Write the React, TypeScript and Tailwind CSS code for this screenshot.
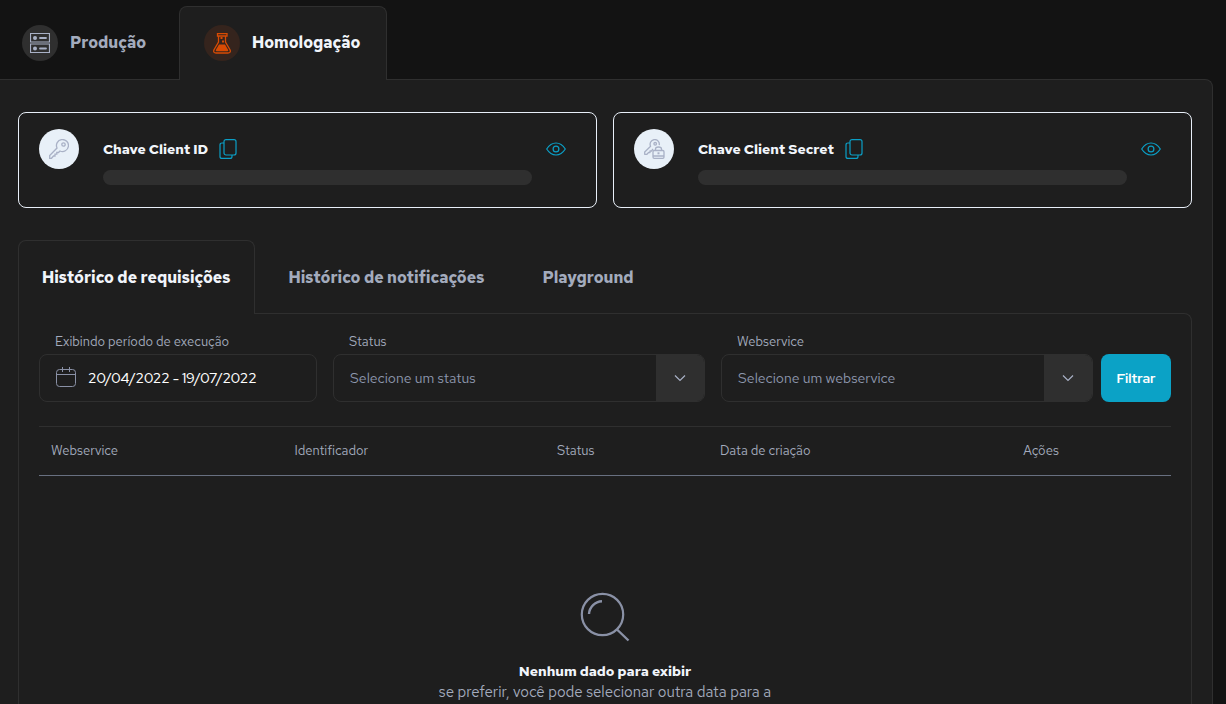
import clsx from "clsx";
import { ComponentType, ReactNode, useState } from "react";

export default function App() {
  return (
    <main className="flex h-screen flex-col overflow-hidden bg-[#131313] pt-1.5 font-['Red_Hat_Text',Inter,sans-serif] text-[#a3abbd]">
      <EnvironmentTabs />
      <section className="mr-[13px] flex grow flex-col rounded-tr-lg border-t border-r border-[#2f2f2f] bg-[#1e1e1e] pt-8 pr-5 pl-[18px]">
        <div className="grid grid-cols-2 gap-4">
          <KeyCard title="Chave Client ID" icon={KeyIcon} />
          <KeyCard title="Chave Client Secret" icon={KeyLockIcon} />
        </div>
        <HistoryTabs />
        <div className="flex grow flex-col rounded-tr-lg border border-b-0 border-[#2f2f2f] px-5 pt-4">
          <Filters />
          <RequestsTable />
          <EmptyState />
        </div>
      </section>
    </main>
  );
}

const EnvironmentTabs = () => (
  <nav className="relative -mb-px flex h-[74px]">
    <button type="button" className="flex w-[179px] items-center gap-3 pl-[22px]">
      <span className="flex size-9 items-center justify-center rounded-full bg-[#2f2f2f]">
        <ServerIcon />
      </span>
      <span className="text-[16px] font-bold">Produção</span>
    </button>
    <button
      type="button"
      className="flex w-[208px] items-center gap-3 rounded-t-lg border border-b-0 border-[#2f2f2f] bg-[#1e1e1e] pb-px pl-6"
    >
      <span className="flex size-9 items-center justify-center rounded-full bg-[#35241d]">
        <FlaskIcon />
      </span>
      <span className="text-[16px] font-bold text-[#f1f5fb]">Homologação</span>
    </button>
  </nav>
);

interface KeyCardProps {
  title: string;
  icon: ComponentType;
}
const KeyCard = ({ title, icon: Icon }: KeyCardProps) => (
  <article className="flex h-24 items-start rounded-lg border border-[#e8eff8] pt-4 pr-[30px] pl-5">
    <span className="mr-6 flex size-10 shrink-0 items-center justify-center rounded-full bg-[#e8f0f8] text-[#a9b1c6]">
      <Icon />
    </span>
    <div className="grow">
      <div className="flex h-10 items-center gap-[11px]">
        <h2 className="text-[14px] font-bold text-[#f1f5fb]">{title}</h2>
        <button type="button" aria-label={`Copiar ${title}`} className="text-[#0b9fc6]">
          <CopyIcon />
        </button>
      </div>
      <div className="mt-px h-[15px] rounded-full bg-[#2f2f2f]" />
    </div>
    <button
      type="button"
      aria-label={`Mostrar ${title}`}
      className="ml-3.5 flex h-10 items-center text-[#0b9fc6]"
    >
      <EyeIcon />
    </button>
  </article>
);

const tabs = ["Histórico de requisições", "Histórico de notificações", "Playground"];

const HistoryTabs = () => {
  const [selected, setSelected] = useState(tabs[0]);

  return (
    <nav className="relative mt-8 -mb-px flex h-[74px] gap-2.5">
      {tabs.map((name) => (
        <button
          key={name}
          type="button"
          onClick={() => setSelected(name)}
          className={clsx(
            "rounded-t-lg border border-b-0 px-[23px] text-[16px] font-bold whitespace-nowrap",
            selected === name
              ? "border-[#2f2f2f] bg-[#1e1e1e] text-[#f1f5fb]"
              : "border-transparent",
          )}
        >
          {name}
        </button>
      ))}
    </nav>
  );
};

interface FieldProps {
  id: string;
  label: string;
  className?: string;
  children: ReactNode;
}
const Field = ({ id, label, className, children }: FieldProps) => (
  <div className={className}>
    <label htmlFor={id} className="block pl-4 text-[13px] leading-6">
      {label}
    </label>
    {children}
  </div>
);

const SelectBox = ({ id, placeholder }: { id: string; placeholder: string }) => (
  <div className="relative h-12 overflow-hidden rounded-lg border border-[#2f2f2f]">
    <select
      id={id}
      className="size-full appearance-none bg-transparent pr-14 pl-4 text-[14px] text-[#8d96ad] outline-none"
    >
      <option>{placeholder}</option>
    </select>
    <span className="pointer-events-none absolute inset-y-0 right-0 flex w-12 items-center justify-center bg-[#2f2f2f]">
      <svg width="12" height="8" viewBox="0 0 12 8" fill="none" stroke="#a9b1c6" strokeWidth="1.2">
        <path d="M1 1.5 6 6.5l5-5" />
      </svg>
    </span>
  </div>
);

const Filters = () => {
  const [period, setPeriod] = useState("20/04/2022 - 19/07/2022");

  return (
    <form className="flex items-end" onSubmit={(event) => event.preventDefault()}>
      <Field id="period" label="Exibindo período de execução" className="w-[278px]">
        <div className="flex h-12 items-center gap-[11px] rounded-lg border border-[#2f2f2f] pl-[15px]">
          <CalendarIcon />
          <input
            id="period"
            type="text"
            value={period}
            onChange={(event) => setPeriod(event.target.value)}
            className="w-full min-w-0 bg-transparent font-['Red_Hat_Display',Inter,sans-serif] text-[14px] font-medium text-white outline-none"
          />
        </div>
      </Field>
      <Field id="status" label="Status" className="ml-4 flex-1">
        <SelectBox id="status" placeholder="Selecione um status" />
      </Field>
      <Field id="webservice" label="Webservice" className="ml-4 flex-1">
        <SelectBox id="webservice" placeholder="Selecione um webservice" />
      </Field>
      <button
        type="submit"
        className="ml-2 h-12 w-[70px] rounded-lg bg-[#0ba2c6] font-['Red_Hat_Display',Inter,sans-serif] text-[14px] font-bold text-white"
      >
        Filtrar
      </button>
    </form>
  );
};

const RequestsTable = () => (
  <table className="mt-6 w-full table-fixed border-separate border-spacing-0 text-left text-[13px]">
    <thead>
      <tr className="h-[50px] *:border-t *:border-b *:border-t-[#2f2f2f] *:border-b-[#687080] *:px-3 *:font-normal">
        <th className="w-[21.5%]">Webservice</th>
        <th className="w-[23.2%]">Identificador</th>
        <th className="w-[14.4%]">Status</th>
        <th className="w-[26.8%]">Data de criação</th>
        <th>Ações</th>
      </tr>
    </thead>
  </table>
);

const EmptyState = () => (
  <div className="flex flex-col items-center pt-[116px] text-center">
    <svg width="50" height="50" viewBox="0 0 50 50" fill="none" stroke="#8a91a6" strokeWidth="2.2">
      <circle cx="22.5" cy="22.5" r="20.7" />
      <path d="M9 22A13.5 13.5 0 0 1 22 9.3M37 37.5l11.5 11" strokeWidth="2.4" />
    </svg>
    <p className="mt-[18px] text-[14px] leading-[22px] font-bold text-[#f1f5fb]">
      Nenhum dado para exibir
    </p>
    <p className="text-[15px] leading-5 whitespace-nowrap">
      se preferir, você pode selecionar outra data para a
    </p>
  </div>
);

const ServerIcon = () => (
  <svg width="20" height="20" viewBox="0 0 20 20" fill="none" stroke="#a9b1c6">
    <path d="M.5.5h19v8.5H.5zM.5 11h19v8.5H.5z" strokeWidth="1.2" />
    <path d="M10 5h6M10 15.5h6" strokeWidth="1.8" strokeLinecap="round" />
    <g fill="#a9b1c6" stroke="none">
      <circle cx="5" cy="5" r="2" />
      <circle cx="5" cy="15.5" r="2" />
    </g>
  </svg>
);

const FlaskIcon = () => (
  <svg width="18" height="21" viewBox="0 0 18 21" fill="none" stroke="#d84b04">
    <path d="M4.5.7h9.5v2.3H4.5zM5.5 3v6L.9 17Q0 20 3 20h12q3 0 2.100-3L12.500 9V3" strokeWidth="1.3" />
    <path d="M6 11.5h6l3.200 5.400q.3 1.400-1 1.400H3.800q-1.300 0-1-1.400z" fill="#d84b04" stroke="none" />
    <path d="M9 8.5h2M7.500 5h2" strokeWidth="2" />
  </svg>
);

const KeyIcon = () => (
  <svg width="20" height="20" viewBox="0 0 20 20" fill="none" stroke="currentColor" strokeWidth="1.3">
    <path d="M8 9A6 6 0 1 1 11 12L9.5 13.5H7.800V15.200H6V17H4.500L2.500 19.300H.7V16.500z" />
    <circle cx="14.5" cy="5.5" r="1.7" />
  </svg>
);

const KeyLockIcon = () => (
  <svg
    width="21"
    height="20"
    viewBox="0 0 21 20"
    fill="none"
    stroke="currentColor"
    strokeWidth="1.3"
    strokeLinejoin="round"
  >
    <path d="M15.2 6.200A4.600 4.600 0 1 0 6.600 7.200L.7 13v2.300h2.200L4.600 13.500H6V12h1.500L9 10" />
    <circle cx="11.2" cy="4.8" r="1.3" />
    <rect x="9" y="11.5" width="11" height="7.8" rx="1.2" />
    <path d="M11.5 11.500V10q0-2 3-2t3 2v1.500M9 17h11" />
    <path d="M14.5 13.300v2" strokeWidth="2" />
  </svg>
);

const CopyIcon = () => (
  <svg width="18" height="20" viewBox="0 0 18 20" fill="none" stroke="currentColor" strokeWidth="1.2">
    <rect x="5" y=".6" width="12" height="15.4" rx="2" />
    <path d="M5 4H3Q1 4 1 6v11.400q0 2 2 2h8q2 0 2-2V16" />
  </svg>
);

const EyeIcon = () => (
  <svg width="20" height="14" viewBox="0 0 20 14" fill="none" stroke="currentColor" strokeWidth="1.2">
    <path d="M.7 7Q4.500 1 10 1t9.300 6Q15.500 13 10 13T.7 7z" />
    <circle cx="10" cy="7" r="2.9" />
  </svg>
);

const CalendarIcon = () => (
  <svg
    width="22"
    height="22"
    viewBox="0 0 22 22"
    fill="none"
    stroke="#8a91a6"
    className="shrink-0"
  >
    <rect x="1.5" y="2.5" width="19" height="17" rx="3" />
    <path d="M1.5 7.5h19M7.5 0v5M14.5 0v5" />
  </svg>
);
